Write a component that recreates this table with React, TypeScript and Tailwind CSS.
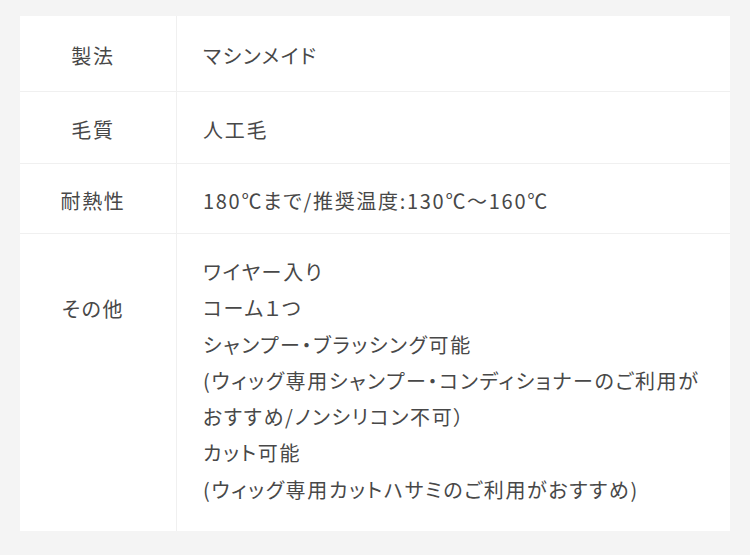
const rows: { label: string; value: string; h: string }[] = [
  { label: "製法", value: "マシンメイド", h: "h-[76px]" },
  { label: "毛質", value: "人工毛", h: "h-[72px]" },
  { label: "耐熱性", value: "180℃まで/推奨温度:130℃〜160℃", h: "h-[70px]" },
];

const others = [
  "ワイヤー入り",
  "コーム１つ",
  "シャンプー・ブラッシング可能",
  "(ウィッグ専用シャンプー・コンディショナーのご利用が",
  "おすすめ/ノンシリコン不可）",
  "カット可能",
  "(ウィッグ専用カットハサミのご利用がおすすめ)",
];

export default function App() {
  return (
    <div
      className="w-[750px] h-[555px] bg-[#f4f4f4] pt-[16px] px-[20px] text-[#484848] text-[20px] tracking-[0.085em] [font-feature-settings:'palt']"
      style={{ fontFamily: '"Noto Sans CJK JP", "Noto Sans", sans-serif' }}
    >
      <div className="bg-white">
        {rows.map((row) => (
          <div key={row.label} className={`flex border-b border-[#f0f0f0] ${row.h}`}>
            <div className="w-[157px] shrink-0 flex items-center justify-center pr-[10px] pt-[4px] border-r border-[#f0f0f0]">
              {row.label}
            </div>
            <div className="flex-1 flex items-center pl-[26px] pr-[20px] pt-[4px]">{row.value}</div>
          </div>
        ))}
        <div className="flex h-[297px]">
          <div className="w-[157px] shrink-0 text-center pr-[10px] pt-[57px] leading-[36.3px] border-r border-[#f0f0f0]">
            その他
          </div>
          <div className="flex-1 pl-[26px] pr-[20px] pt-[20px] leading-[36.3px] whitespace-nowrap">
            {others.map((line) => (
              <div key={line}>{line}</div>
            ))}
          </div>
        </div>
      </div>
    </div>
  );
}
